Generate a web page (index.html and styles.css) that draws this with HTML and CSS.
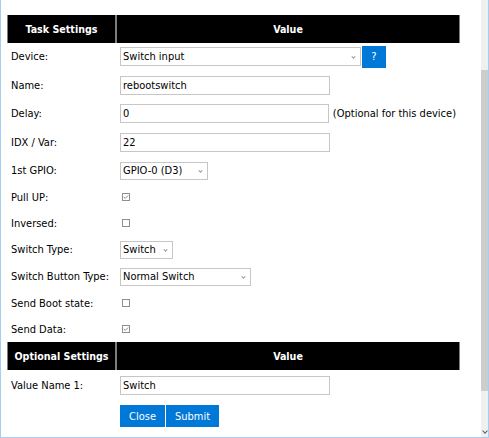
FILE: index.html
```html
<!DOCTYPE html>
<html lang="en">
<head>
  <meta charset="UTF-8" />
  <meta name="viewport" content="width=device-width, initial-scale=1.0"/>
  <title>Task Settings</title>
  <link rel="stylesheet" href="styles.css">
</head>
<body>
  <div class="window">
    <div class="page">
      <table class="settings">
        <colgroup><col class="col-label"><col class="col-value"></colgroup>
        <tr class="head"><th>Task Settings</th><th>Value</th></tr>
        <tr class="row-input">
          <td>Device:</td>
          <td>
            <div class="field">
              <span class="select-wrap"><select class="sel-device"><option>Switch input</option></select></span>
              <button class="btn btn-help">?</button>
            </div>
          </td>
        </tr>
        <tr class="row-input">
          <td>Name:</td>
          <td><div class="field"><input type="text" class="txt" value="rebootswitch"></div></td>
        </tr>
        <tr class="row-input">
          <td>Delay:</td>
          <td><div class="field"><input type="text" class="txt" value="0"><span class="note">(Optional for this device)</span></div></td>
        </tr>
        <tr class="row-input">
          <td>IDX / Var:</td>
          <td><div class="field"><input type="text" class="txt" value="22"></div></td>
        </tr>
        <tr class="row-gpio">
          <td>1st GPIO:</td>
          <td><div class="field"><span class="select-wrap"><select class="sel-gpio"><option>GPIO-0 (D3)</option></select></span></div></td>
        </tr>
        <tr class="row-check first">
          <td>Pull UP:</td>
          <td><div class="field"><svg class="check" width="8" height="8" viewBox="0 0 8 8"><rect x="0.5" y="0.5" width="7" height="7" fill="#fff" stroke="#8f8f8f"/><path d="M1.8 4 L3.3 5.4 L6.2 2.4" fill="none" stroke="#7a7a7a" stroke-width="0.9"/></svg></div></td>
        </tr>
        <tr class="row-check">
          <td>Inversed:</td>
          <td><div class="field"><svg class="check" width="8" height="8" viewBox="0 0 8 8"><rect x="0.5" y="0.5" width="7" height="7" fill="#fff" stroke="#8f8f8f"/></svg></div></td>
        </tr>
        <tr class="row-select">
          <td>Switch Type:</td>
          <td><div class="field"><span class="select-wrap"><select class="sel-type"><option>Switch</option></select></span></div></td>
        </tr>
        <tr class="row-select">
          <td>Switch Button Type:</td>
          <td><div class="field"><span class="select-wrap"><select class="sel-button"><option>Normal Switch</option></select></span></div></td>
        </tr>
        <tr class="row-check">
          <td>Send Boot state:</td>
          <td><div class="field"><svg class="check" width="8" height="8" viewBox="0 0 8 8"><rect x="0.5" y="0.5" width="7" height="7" fill="#fff" stroke="#8f8f8f"/></svg></div></td>
        </tr>
        <tr class="row-check">
          <td>Send Data:</td>
          <td><div class="field"><svg class="check" width="8" height="8" viewBox="0 0 8 8"><rect x="0.5" y="0.5" width="7" height="7" fill="#fff" stroke="#8f8f8f"/><path d="M1.8 4 L3.3 5.4 L6.2 2.4" fill="none" stroke="#7a7a7a" stroke-width="0.9"/></svg></div></td>
        </tr>
        <tr class="head"><th>Optional Settings</th><th>Value</th></tr>
        <tr class="row-input last">
          <td>Value Name 1:</td>
          <td><div class="field"><input type="text" class="txt" value="Switch"></div></td>
        </tr>
        <tr class="row-buttons">
          <td></td>
          <td><div class="field"><button class="btn btn-close">Close</button><button class="btn btn-submit">Submit</button></div></td>
        </tr>
      </table>
    </div>
    <div class="scrollbar">
      <div class="thumb"></div>
      <div class="scroll-end"><span class="arrow"></span></div>
    </div>
  </div>
</body>
</html>
```

FILE: styles.css
```css
body {
  margin: 0;
  font-family: "DejaVu Sans Condensed", "DejaVu Sans", sans-serif;
  font-stretch: condensed;
  font-size: 11px;
  color: #000;
  background-color: #fff;
}

.window {
  display: flex;
  height: 438px;
  box-sizing: border-box;
  border: 1px solid #a6cdf2;
  border-top: none;
}

.page {
  flex: 1;
  padding: 15px 0 0 6px;
}

.settings {
  width: 453px;
  table-layout: fixed;
  border-collapse: separate;
  border-spacing: 0;
}

.col-label { width: 109px; }
.col-value { width: 344px; }

.settings th {
  height: 27.5px;
  padding: 0;
  background-color: #000;
  color: #fff;
  font-weight: bold;
  font-size: 10.6px;
  text-align: center;
  border-left: 1px solid #7d7d7d;
  border-right: 1px solid #7d7d7d;
}

.settings td {
  padding: 0 4px;
  vertical-align: middle;
  white-space: nowrap;
}

.row-input td { height: 28.5px; }
.row-input.last td { height: 31px; }
.row-gpio td { height: 28px; }
.row-check td { height: 26px; }
.row-check.first td { height: 25.5px; }
.row-select td { height: 27px; }
.row-buttons td { padding-top: 4.5px; }

.field {
  display: flex;
  align-items: center;
}

.txt {
  width: 210px;
  height: 19px;
  box-sizing: border-box;
  margin: 0;
  padding: 0 2px;
  border: 1px solid #c6c6c6;
  font-family: inherit;
  font-stretch: inherit;
  font-size: 11px;
  color: #000;
}

.note {
  margin-left: 4px;
}

.select-wrap {
  position: relative;
  display: inline-block;
}

.select-wrap::after {
  content: "";
  position: absolute;
  right: 6px;
  top: 50%;
  width: 2px;
  height: 2px;
  border-right: 1px solid #9a9a9a;
  border-bottom: 1px solid #9a9a9a;
  transform: translateY(-60%) rotate(45deg);
  pointer-events: none;
}

.select-wrap select {
  display: block;
  appearance: none;
  -webkit-appearance: none;
  height: 18px;
  box-sizing: border-box;
  margin: 0;
  padding: 0 2px;
  border: 1px solid #c6c6c6;
  border-radius: 0;
  background-color: #fff;
  font-family: inherit;
  font-stretch: inherit;
  font-size: 11px;
  color: #000;
}

.sel-device { width: 241px; height: 19px !important; }
.sel-gpio { width: 88px; }
.sel-type { width: 53px; }
.sel-button { width: 131px; }

.check {
  display: block;
  margin-left: 2px;
}

.btn {
  height: 22px;
  margin: 0;
  padding: 0 8px;
  border: none;
  background-color: #0078d7;
  color: #fff;
  font-family: inherit;
  font-stretch: inherit;
  font-size: 11px;
  cursor: pointer;
}

.btn-help {
  width: 24px;
  padding: 0;
  margin-left: 1px;
}

.btn-close { width: 45px; padding: 0; }

.btn-submit {
  width: 53px;
  padding: 0;
  margin-left: 1px;
}

.scrollbar {
  width: 7px;
  display: flex;
  flex-direction: column;
  background-color: #f0f0f0;
}

.thumb {
  margin-top: 70px;
  height: 321px;
  background-color: #cdcdcd;
}

.scroll-end {
  flex: 1;
  display: flex;
  justify-content: center;
  align-items: flex-end;
  padding-bottom: 4px;
}

.arrow {
  width: 3px;
  height: 3px;
  border-right: 1px solid #606060;
  border-bottom: 1px solid #606060;
  transform: rotate(45deg);
}
```
